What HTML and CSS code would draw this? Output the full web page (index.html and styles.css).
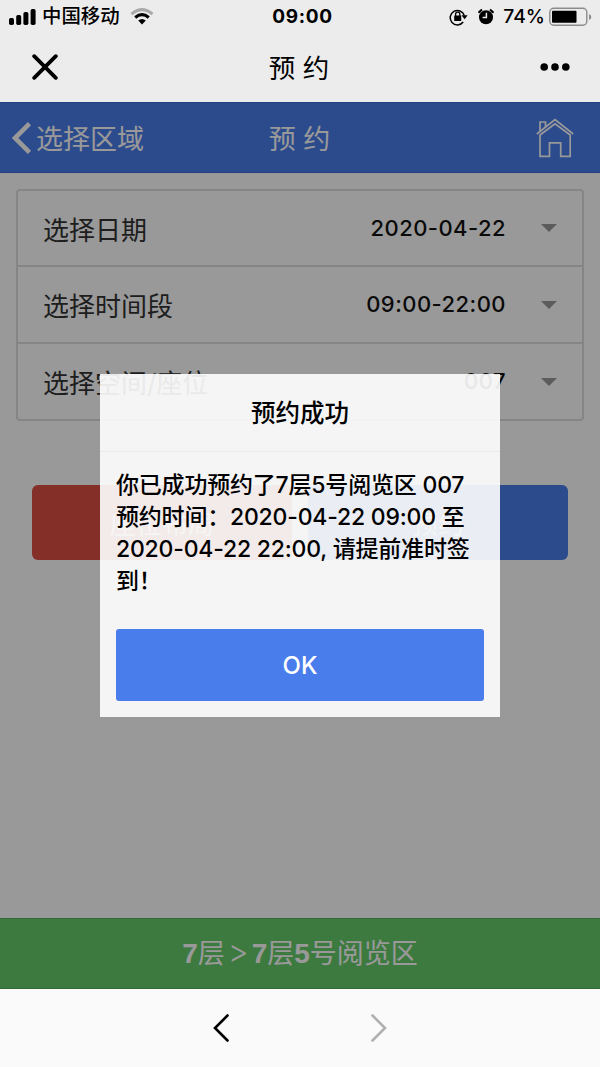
FILE: index.html
```
<!DOCTYPE html>
<html lang="zh-CN">
  <head>
    <meta charset="utf-8">
    <title>预 约</title>
    <link rel="stylesheet" href="styles.css">
  </head>
  <body>
    <div class="status-bar">
      <div class="status-left">
        <svg class="signal" width="28" height="18" viewBox="0 0 28 18">
          <rect x="0" y="10" width="5" height="7" rx="1.7"/>
          <rect x="7.2" y="7" width="5" height="10" rx="1.7"/>
          <rect x="14.4" y="4" width="5" height="13" rx="1.7"/>
          <rect x="21.6" y="1" width="5" height="16" rx="1.7"/>
        </svg>
        <span class="carrier">中国移动</span>
        <svg class="wifi" width="24" height="18" viewBox="0 0 24 18">
          <path d="M1.5 6.2Q12-3 22.5 6.2" fill="none" stroke="#aaa" stroke-width="3"/>
          <path d="M5.2 9.5Q12 3.8 18.8 9.5" fill="none" stroke="#000" stroke-width="3"/>
          <path d="M8.2 12.5Q12 9.3 15.8 12.5L12 16.5Z"/>
        </svg>
      </div>
      <span class="clock">09:00</span>
      <div class="status-right">
        <svg class="lock" width="19" height="18" viewBox="0 0 19 18">
          <path d="M14.2 14A7.2 7.2 0 1 1 15.3 7.5" fill="none" stroke="#000" stroke-width="1.5"/>
          <path d="M12.5 7.3H18.6L15.6 11.2Z"/>
          <rect x="5.2" y="7.5" width="7" height="5.5" rx=".6"/>
          <path d="M6.6 8V6.3A2.1 2.1 0 0 1 10.8 6.3V8" fill="none" stroke="#000" stroke-width="1.3"/>
        </svg>
        <svg class="alarm" width="16" height="18" viewBox="0 0 16 18">
          <circle cx="8" cy="9.3" r="7"/>
          <path d="M.5 4.7L4 1.6M15.5 4.7L12 1.6" stroke="#000" stroke-width="2"/>
          <path d="M8.4 4.8V9.6H4.6" fill="none" stroke="#ececec" stroke-width="1.5"/>
        </svg>
        <span class="percent">74%</span>
        <svg class="battery" width="43" height="20" viewBox="0 0 43 20">
          <rect x=".8" y="1.3" width="37" height="17" rx="4" fill="none" stroke="#8b8b8b" stroke-width="1.4"/>
          <rect x="3" y="3.8" width="24.5" height="12" rx="1"/>
          <path d="M40 7Q42.3 8 42.3 10T40 13Z" fill="#8b8b8b"/>
        </svg>
      </div>
    </div>

    <div class="title-bar">
      <svg width="26" height="26" viewBox="0 0 26 26">
        <path d="M2.2 2.2L23.8 23.8M23.8 2.2L2.2 23.8" stroke="#000" stroke-width="3.8" stroke-linecap="round"/>
      </svg>
      <span>预 约</span>
      <svg width="30" height="8" viewBox="0 0 30 8">
        <circle cx="4.2" cy="4" r="3.8"/>
        <circle cx="15" cy="4" r="3.8"/>
        <circle cx="25.8" cy="4" r="3.8"/>
      </svg>
    </div>

    <div class="page">
      <div class="header">
        <div class="back">
          <svg width="20" height="32" viewBox="0 0 20 32">
            <path d="M17.5 1.7L3 16L17.5 30.3" fill="none" stroke="#fff" stroke-width="4.6"/>
          </svg>
          <span>选择区域</span>
        </div>
        <span class="header-title">预 约</span>
        <svg class="home" width="38" height="40" viewBox="0 0 38 40">
          <path d="M.8 16L19 1.5L37.2 16M4 12.8V4H9.5V8.5M4 17V38.3H13.5V24.8H24.7V38.3H34.2V17L19 5.8Z" fill="none" stroke="#fff" stroke-width="1.7"/>
        </svg>
      </div>

      <div class="content">
        <div class="form">
          <div class="row">
            <span class="label">选择日期</span>
            <span class="value">2020-04-22</span>
            <span class="arrow"></span>
          </div>
          <div class="row">
            <span class="label">选择时间段</span>
            <span class="value">09:00-22:00</span>
            <span class="arrow"></span>
          </div>
          <div class="row">
            <span class="label">选择空间/座位</span>
            <span class="value">007</span>
            <span class="arrow"></span>
          </div>
        </div>
        <div class="actions">
          <button class="btn btn-red">座位布局</button>
          <button class="btn btn-blue">预约</button>
        </div>
      </div>

      <div class="footer"><b>7</b>层<span class="gt">&gt;</span><b>7</b>层<b>5</b>号阅览区</div>

      <div class="overlay">
        <div class="modal">
          <div class="modal-title">预约成功</div>
          <div class="modal-body">
            你已成功预约了7层5号阅览区 007<br>
            预约时间：2020-04-22 09:00 至<br>
            2020-04-22 22:00, 请提前准时签<br>
            到！
          </div>
          <button class="btn-ok">OK</button>
        </div>
      </div>
    </div>

    <div class="toolbar">
      <svg width="16" height="28" viewBox="0 0 16 28">
        <path d="M14.5 1.5L2 14L14.5 26.5" fill="none" stroke="#000" stroke-width="2.6" stroke-linecap="round"/>
      </svg>
      <svg width="16" height="28" viewBox="0 0 16 28">
        <path d="M1.5 1.5L14 14L1.5 26.5" fill="none" stroke="#b0b0b0" stroke-width="2.6" stroke-linecap="round"/>
      </svg>
    </div>
  </body>
</html>
```
FILE: styles.css
```
* {
  box-sizing: border-box;
}
body {
  margin: 0;
  width: 600px;
  height: 1067px;
  display: flex;
  flex-direction: column;
  overflow: hidden;
  font-family: Inter, "Noto Sans CJK SC", sans-serif;
  font-weight: 500;
  color: #000;
  background: #fafafa;
}
button {
  border: 0;
  padding: 0;
  font: inherit;
  color: #fff;
}
svg {
  display: block;
  flex: none;
}

/* phone status bar */
.status-bar {
  height: 33px;
  display: grid;
  grid-template-columns: 1fr auto 1fr;
  align-items: center;
  padding: 0 8px 0 9px;
  background: #ececec;
  font-size: 19px;
  line-height: 33px;
  white-space: nowrap;
}
.status-left,
.status-right {
  display: flex;
  align-items: center;
}
.status-right {
  justify-content: flex-end;
}
.carrier {
  margin-left: 5px;
  font-size: 19.4px;
}
.wifi {
  margin-left: 10px;
}
.clock {
  font-weight: 700;
  letter-spacing: 0.7px;
  margin-left: 4px;
}
.alarm {
  margin: 0 9px 0 10px;
}
.percent {
  font-size: 19.3px;
}
.battery {
  margin-left: 4px;
}

.title-bar {
  height: 69px;
  display: flex;
  align-items: center;
  justify-content: space-between;
  padding: 0 30px 2px 32px;
  background: #ececec;
  font-size: 26.5px;
  font-weight: 400;
}

.page {
  position: relative;
  height: 887px;
  display: flex;
  flex-direction: column;
  background: #fff;
}
.header {
  height: 71px;
  display: grid;
  grid-template-columns: 1fr auto 1fr;
  align-items: center;
  padding: 0 26px 0 12px;
  background: #497dec;
  border-top: 1px solid #3b6cda;
  border-bottom: 1px solid #3b6cda;
  color: #fff;
  font-size: 27px;
  font-weight: 400;
}
.back {
  display: flex;
  align-items: center;
  gap: 4px;
}
.header-title {
  margin-left: 13px;
}
.home {
  justify-self: end;
}

.content {
  flex: 1;
  padding: 16px;
}
.form {
  height: 232px;
  display: flex;
  flex-direction: column;
  border: 2px solid #dedede;
  border-radius: 4px;
}
.row {
  flex: none;
  height: 77px;
  display: flex;
  align-items: center;
  padding: 0 25px;
  border-bottom: 2px solid #dedede;
}
.row:first-child {
  height: 76px;
}
.row:last-child {
  height: 75px;
  border-bottom: 0;
}
.label {
  flex: 1;
  font-size: 26px;
  font-weight: 400;
  color: #333;
}
.value {
  padding-bottom: 1px;
  font-size: 22px;
  letter-spacing: 0.45px;
  color: #111;
}
.arrow {
  margin-left: 35px;
  border: 8px solid transparent;
  border-top-color: #999;
  border-bottom: 0;
}
.actions {
  display: flex;
  gap: 16px;
  padding: 64px 16px 0;
}
.btn {
  flex: 1;
  height: 75px;
  border-radius: 6px;
  font-size: 26px;
  font-weight: 400;
}
.btn-red {
  background: #dd5044;
}
.btn-blue {
  background: #497dec;
}

.footer {
  height: 71px;
  background: #67cb6a;
  border-top: 1px solid #55b558;
  border-bottom: 1px solid #55b558;
  color: #fff;
  font-size: 27px;
  font-weight: 400;
  line-height: 69px;
  text-align: center;
}
.footer b {
  font-family: "Liberation Sans", sans-serif;
  font-size: 28px;
}
.gt {
  padding: 0 3px;
  font-size: 32px;
  font-weight: 300;
  line-height: 1;
}

.overlay {
  position: absolute;
  inset: 0;
  display: flex;
  align-items: center;
  justify-content: center;
  background: rgba(0, 0, 0, 0.4);
}
.modal {
  width: 400px;
  height: 343px;
  display: flex;
  flex-direction: column;
  background: rgba(255, 255, 255, 0.9);
}
.modal-title {
  height: 78px;
  border-bottom: 1px solid #ebebeb;
  font-size: 24.5px;
  line-height: 78px;
  text-align: center;
}
.modal-body {
  flex: 1;
  padding: 17px 16px 0;
  font-size: 23px;
  letter-spacing: -0.2px;
  line-height: 32px;
  white-space: nowrap;
}
.btn-ok {
  height: 72px;
  margin: 0 16px 16px;
  border-radius: 3px;
  background: #497dec;
  font-size: 24px;
}

.toolbar {
  flex: 1;
  display: flex;
  align-items: center;
  justify-content: center;
  gap: 142px;
  background: #fafafa;
}
```
